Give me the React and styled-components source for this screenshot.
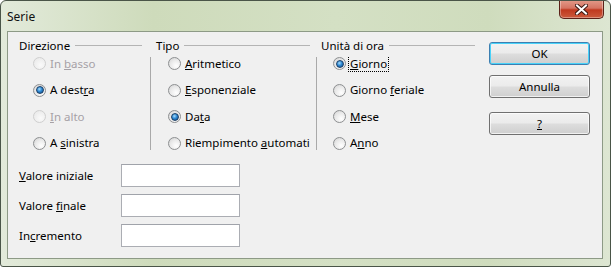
import React from 'react';
import styled, { createGlobalStyle } from 'styled-components';

const Global = createGlobalStyle`
  html, body { margin: 0; padding: 0; background: #ffffff; }
  body { font-family: "Noto Sans", "Open Sans", sans-serif; font-size: 11.5px; color: #000; }
`;

const Win = styled.div`
  width: 611px;
  height: 267px;
  box-sizing: border-box;
  border: 1px solid #4a5548;
  border-radius: 6px 6px 3px 3px;
  background: linear-gradient(90deg, #e2eada 0%, #cedbbb 25%, #d4e0c4 55%, #cfdcbd 80%, #dde6d2 100%);
  display: flex;
  flex-direction: column;
  overflow: hidden;
`;

const TitleBar = styled.div`
  height: 30px;
  display: flex;
  align-items: flex-start;
  justify-content: space-between;
  padding-left: 6px;
  .title {
    font-family: "Noto Sans", sans-serif;
    font-size: 12px;
    line-height: 14px;
    margin-top: 9px;
    color: #111;
  }
`;

const CloseBtn = styled.div`
  width: 45px;
  height: 19px;
  margin-top: -1px;
  margin-right: 6px;
  box-sizing: border-box;
  border: 1px solid #5b2118;
  border-top: none;
  border-radius: 0 0 5px 5px;
  background: linear-gradient(180deg, #e39b8a 0%, #d57462 45%, #c0391f 55%, #cb5a3c 100%);
  box-shadow: inset 0 0 0 1px rgba(255,255,255,0.35);
  display: flex;
  align-items: center;
  justify-content: center;
`;

const Client = styled.div`
  flex: 1;
  margin: 0 7px 7px 6px;
  border: 1px solid #8d9a86;
  background: #f0f0f0;
  padding: 6px 12px 0 11px;
  display: flex;
  flex-direction: column;
`;

const Top = styled.div`
  display: flex;
  align-items: flex-start;
`;

const Group = styled.div`
  width: ${p => p.$w}px;
  margin-left: ${p => p.$ml || 0}px;
  display: flex;
  flex-direction: column;
`;

const Header = styled.div`
  height: 14px;
  display: flex;
  align-items: center;
  gap: 5px;
  padding-left: ${p => p.$pl || 0}px;
  white-space: nowrap;
  &::after {
    content: "";
    flex: 1;
    height: 1px;
    background: #b4b4b4;
    margin-top: 1px;
  }
`;

const Body = styled.div`
  margin-top: 5px;
  padding-left: ${p => p.$pl}px;
  border-left: ${p => (p.$line ? '1px solid #a9a9a9' : 'none')};
  display: flex;
  flex-direction: column;
  gap: 13.6px;
  overflow: hidden;
  height: 93px;
`;

const RadioRow = styled.div`
  height: 13px;
  display: flex;
  align-items: center;
  gap: 4px;
  white-space: nowrap;
  color: ${p => (p.$disabled ? '#a6a1a6' : '#000')};
`;

const Dot = styled.span`
  flex: none;
  width: 13px;
  height: 13px;
  box-sizing: border-box;
  border-radius: 50%;
  border: 1px solid ${p => (p.$disabled ? '#cfcfcf' : '#8d8f91')};
  background: ${p =>
    p.$disabled
      ? 'radial-gradient(circle at 60% 65%, #fafafa 0%, #ececec 70%)'
      : 'radial-gradient(circle at 65% 70%, #ffffff 0%, #e9e9e9 55%, #cfcfcf 100%)'};
  display: flex;
  align-items: center;
  justify-content: center;
  &::after {
    content: "";
    display: ${p => (p.$checked ? 'block' : 'none')};
    width: 6px;
    height: 6px;
    border-radius: 50%;
    background: radial-gradient(circle at 40% 35%, #a9dcfa 0%, #2d8ad6 45%, #14467c 100%);
    border: 0.5px solid #1c3f66;
  }
`;

const Label = styled.span`
  line-height: 14px;
  padding: 0 1px;
  border: 1px dotted ${p => (p.$focus ? '#000' : 'transparent')};
  margin-left: -2px;
  u { text-decoration: underline; text-underline-offset: 1px; }
`;

const Buttons = styled.div`
  margin-left: 14px;
  margin-top: 4px;
  display: flex;
  flex-direction: column;
`;

const Button = styled.div`
  width: 101px;
  height: 23px;
  box-sizing: border-box;
  margin-bottom: ${p => p.$mb}px;
  border: 1px solid ${p => (p.$default ? '#3c7fb1' : '#707070')};
  border-radius: 3px;
  background: linear-gradient(180deg, #f2f2f2 0%, #ebebeb 48%, #dddddd 52%, #cfcfcf 100%);
  box-shadow: inset 0 0 0 1px ${p => (p.$default ? '#48d2f9' : 'rgba(255,255,255,0.7)')};
  display: flex;
  align-items: center;
  justify-content: center;
  u { text-decoration: underline; }
`;

const Form = styled.div`
  margin-top: 14px;
  display: flex;
  flex-direction: column;
  gap: 7px;
`;

const FieldRow = styled.div`
  display: flex;
  align-items: center;
  height: 23px;
  span { width: 102px; }
  u { text-decoration: underline; }
`;

const Input = styled.div`
  width: 119px;
  height: 23px;
  box-sizing: border-box;
  background: #fff;
  border: 1px solid #abadb3;
  border-top-color: #a0a3aa;
`;

const Radio = ({ children, checked, disabled, focus }) => (
  <RadioRow $disabled={disabled}>
    <Dot $checked={checked} $disabled={disabled} />
    <Label $focus={focus}>{children}</Label>
  </RadioRow>
);

export default function App() {
  return (
    <>
      <Global />
      <Win>
        <TitleBar>
          <span className="title">Serie</span>
          <CloseBtn>
            <svg width="13" height="11" viewBox="0 0 13 11">
              <path d="M2 1.5 L11 9.5 M11 1.5 L2 9.5" stroke="#3d1a14" strokeWidth="4" strokeLinecap="square" />
              <path d="M2 1.5 L11 9.5 M11 1.5 L2 9.5" stroke="#ffffff" strokeWidth="2" strokeLinecap="square" />
            </svg>
          </CloseBtn>
        </TitleBar>
        <Client>
          <Top>
            <Group $w={123}>
              <Header>Direzione</Header>
              <Body $pl={14}>
                <Radio disabled>In <u>b</u>asso</Radio>
                <Radio checked>A dest<u>r</u>a</Radio>
                <Radio disabled><u>I</u>n alto</Radio>
                <Radio>A <u>s</u>inistra</Radio>
              </Body>
            </Group>
            <Group $w={160} $ml={8}>
              <Header $pl={6}>Tipo</Header>
              <Body $pl={17} $line>
                <Radio><u>A</u>ritmetico</Radio>
                <Radio><u>E</u>sponenziale</Radio>
                <Radio checked>Da<u>t</u>a</Radio>
                <Radio>Riempimento <u>a</u>utomati</Radio>
              </Body>
            </Group>
            <Group $w={159} $ml={6}>
              <Header $pl={5}>Unità di ora</Header>
              <Body $pl={16} $line>
                <Radio checked focus><u>G</u>iorno</Radio>
                <Radio>Giorno <u>f</u>eriale</Radio>
                <Radio><u>M</u>ese</Radio>
                <Radio>A<u>n</u>no</Radio>
              </Body>
            </Group>
            <Buttons>
              <Button $default $mb={10}>OK</Button>
              <Button $mb={14}>Annulla</Button>
              <Button $mb={0}><u>?</u></Button>
            </Buttons>
          </Top>
          <Form>
            <FieldRow><span><u>V</u>alore iniziale</span><Input /></FieldRow>
            <FieldRow><span>Valore <u>f</u>inale</span><Input /></FieldRow>
            <FieldRow><span>In<u>c</u>remento</span><Input /></FieldRow>
          </Form>
        </Client>
      </Win>
    </>
  );
}
